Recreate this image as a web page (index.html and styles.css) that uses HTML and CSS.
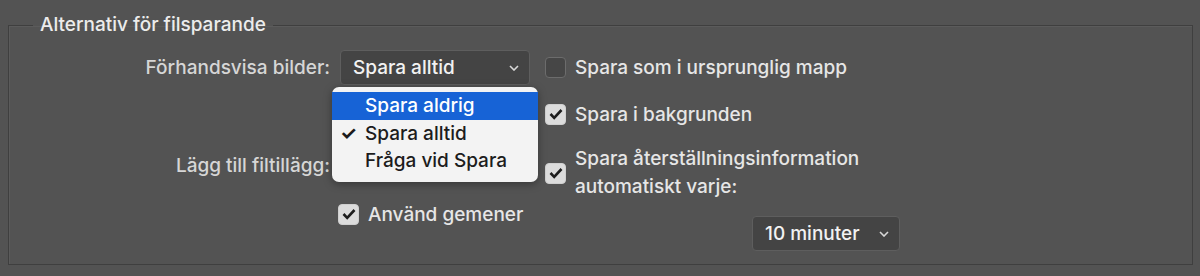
FILE: index.html
```html
<!DOCTYPE html>
<html lang="sv">
<head>
  <meta charset="UTF-8" />
  <title>Alternativ för filsparande</title>
  <link rel="stylesheet" href="styles.css">
</head>
<body>

  <fieldset class="group">
    <legend>Alternativ för filsparande</legend>

    <div class="grid">
      <label class="field-label row1">Förhandsvisa bilder:</label>
      <div class="select-wrap row1">
        <div class="select">
          <span>Spara alltid</span>
          <svg class="chevron" width="10" height="6" viewBox="0 0 10 6"><polyline points="1,1 5,5 9,1" fill="none" stroke="#d8d8d8" stroke-width="1.6"/></svg>
        </div>
        <div class="menu">
          <div class="menu-item active">Spara aldrig</div>
          <div class="menu-item"><span class="tick">✓</span>Spara alltid</div>
          <div class="menu-item">Fråga vid Spara</div>
        </div>
      </div>
      <div class="check row1">
        <span class="box"></span>
        <span>Spara som i ursprunglig mapp</span>
      </div>

      <div class="check row2 col3">
        <span class="box checked"><svg width="14" height="12" viewBox="0 0 14 12"><polyline points="1.5,6 5.2,9.8 12.5,2" fill="none" stroke="#1e1e1e" stroke-width="2.6"/></svg></span>
        <span>Spara i bakgrunden</span>
      </div>

      <label class="field-label row3 ext-label">Lägg till filtillägg:</label>
      <div class="check row3 col3">
        <span class="box checked"><svg width="14" height="12" viewBox="0 0 14 12"><polyline points="1.5,6 5.2,9.8 12.5,2" fill="none" stroke="#1e1e1e" stroke-width="2.6"/></svg></span>
        <span class="two-line">Spara återställningsinformation<br>automatiskt varje:</span>
      </div>

      <div class="check row4 col2 lower">
        <span class="box checked"><svg width="14" height="12" viewBox="0 0 14 12"><polyline points="1.5,6 5.2,9.8 12.5,2" fill="none" stroke="#1e1e1e" stroke-width="2.6"/></svg></span>
        <span>Använd gemener</span>
      </div>
      <div class="select small row4 col3">
        <span>10 minuter</span>
        <svg class="chevron" width="10" height="6" viewBox="0 0 10 6"><polyline points="1,1 5,5 9,1" fill="none" stroke="#d8d8d8" stroke-width="1.6"/></svg>
      </div>
    </div>
  </fieldset>

</body>
</html>
```

FILE: styles.css
```css
body {
  margin: 0;
  background: #535353;
  font-family: Inter, "Noto Sans", sans-serif;
  font-size: 19px;
  font-weight: 500;
  color: #e2e2e2;
  height: 276px;
  overflow: hidden;
}

.group {
  margin: 14px 7px 0 8px;
  padding: 0 0 13px 0;
  border: 1px solid #3f3f3f;
  box-shadow: inset 1px 1px 0 #5b5b5b;
}

.group legend {
  margin-left: 24px;
  padding: 0 7px;
  line-height: 22px;
  color: #ececec;
}

.grid {
  margin-top: 14px;
  display: grid;
  grid-template-columns: 321px 200px 1fr;
  grid-template-rows: 35px 58px 60px 48px;
}

.row1 { grid-row: 1; }
.row2 { grid-row: 2; }
.row3 { grid-row: 3; }
.row4 { grid-row: 4; }
.col2 { grid-column: 2; }
.col3 { grid-column: 3; }

.field-label {
  grid-column: 1;
  justify-self: end;
  align-self: center;
  color: #d6d6d6;
}

.ext-label {
  margin-top: -16px;
}

.select-wrap {
  grid-column: 2;
  margin-left: 10px;
  position: relative;
}

.select {
  height: 35px;
  box-sizing: border-box;
  background: #444444;
  border: 1px solid #5e5e5e;
  border-radius: 4px;
  display: flex;
  align-items: center;
  justify-content: space-between;
  padding: 0 10px 0 12px;
  color: #f2f2f2;
}

.select.small {
  width: 148px;
  margin: 13px 0 0 222px;
}

.menu {
  position: absolute;
  left: -8px;
  top: 37px;
  width: 206px;
  box-sizing: border-box;
  padding: 5px 0 7px 0;
  background: #f3f3f3;
  border-radius: 7px;
  box-shadow: 0 2px 8px rgba(0,0,0,0.35);
  color: #1c1c1c;
  z-index: 2;
}

.menu-item {
  height: 27.5px;
  display: flex;
  align-items: center;
  padding-left: 33px;
  position: relative;
}

.menu-item.active {
  background: #1763d6;
  color: white;
}

.tick {
  position: absolute;
  left: 8px;
  font-size: 19px;
  font-weight: 700;
}

.check {
  display: flex;
  align-items: center;
  gap: 9px;
  margin-left: 15px;
  color: #e6e6e6;
}

.check.lower {
  align-self: start;
  margin-left: 8px;
  height: 22px;
}

.two-line {
  line-height: 28px;
}

.box {
  width: 21px;
  height: 21px;
  box-sizing: border-box;
  border-radius: 4px;
  background: #464646;
  border: 1px solid #6c6c6c;
  flex-shrink: 0;
  display: flex;
  align-items: center;
  justify-content: center;
}

.box.checked {
  background: #dcdcdc;
  border-color: #cfcfcf;
}
```
